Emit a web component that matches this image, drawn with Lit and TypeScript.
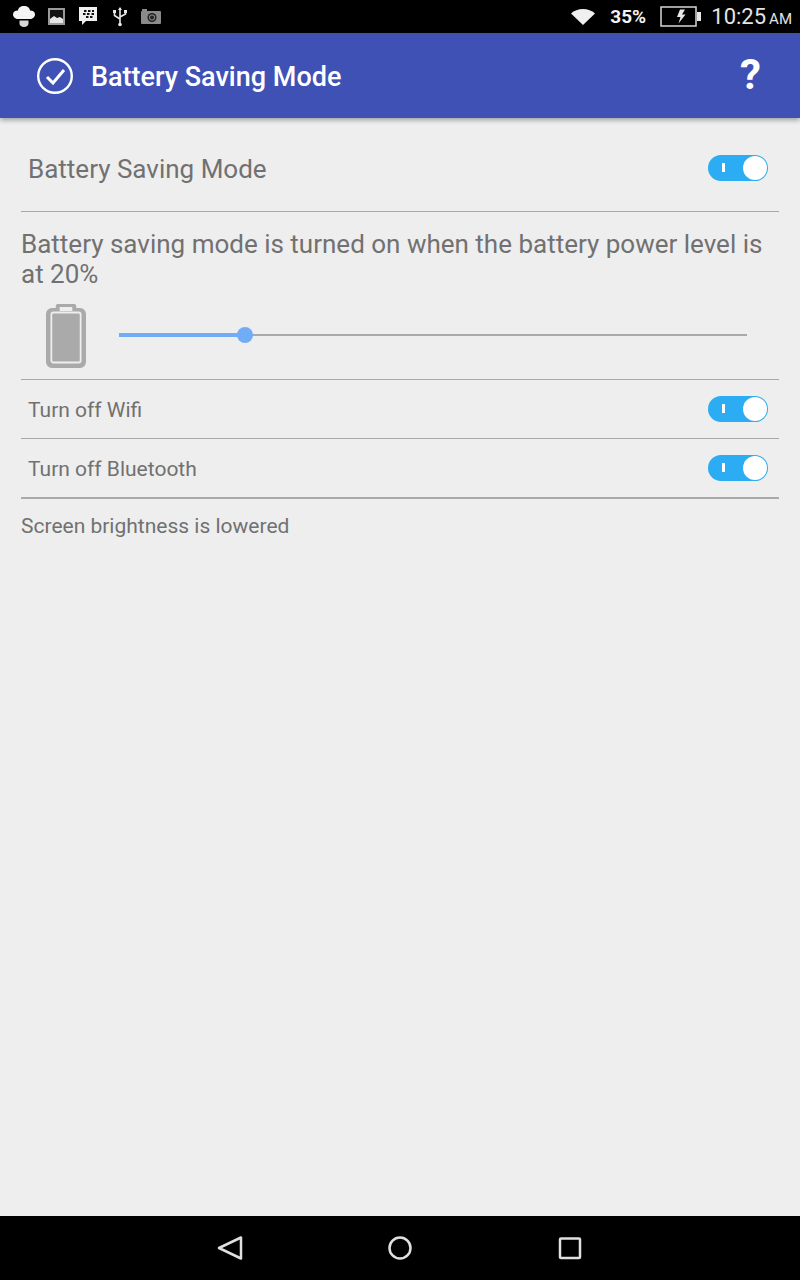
import { LitElement, html, css } from "lit";
import { customElement } from "lit/decorators.js";

@customElement("app-root")
export class AppRoot extends LitElement {
  static styles = css`
    :host { display: flex; flex-direction: column; width: 800px; height: 1280px; background: #eee; font-family: Roboto, "Liberation Sans", sans-serif; color: #717171; overflow: hidden; }
    .status { height: 33px; flex: none; background: #000; display: flex; align-items: center; color: #fff; }
    .status svg { display: block; flex: none; }
    .left { display: flex; align-items: center; padding-left: 12px; }
    .right { margin-left: auto; display: flex; align-items: center; }
    .pct { font-size: 19px; font-weight: 700; color: #f2f2f2; margin-left: 15px; width: 50px; }
    .time { font-size: 22px; color: #e4e4e4; margin-left: 10px; margin-right: 8px; white-space: nowrap; }
    .time small { font-size: 15px; margin-left: 3px; }
    .appbar { height: 85px; flex: none; background: #3f51b5; display: flex; align-items: center; box-shadow: 0 2px 5px rgba(0,0,0,.35); z-index: 1; padding-left: 36px; padding-right: 39px; }
    .title { color: #fff; font-size: 27px; font-weight: 500; margin-left: 17px; flex: 1; padding-top: 3px; }
    .help { color: #fff; font-size: 42px; font-weight: 700; line-height: 1; padding-bottom: 2px; }
    .main { flex: 1; padding: 0 21px; display: flex; flex-direction: column; }
    .row { display: flex; align-items: center; justify-content: space-between; padding: 0 11px 0 7px; border-bottom: 1px solid #a9a9a9; box-sizing: border-box; }
    .row span { padding-top: 2px; }
    .r1 { height: 94px; font-size: 26px; padding-top: 7px; }
    .r2 { height: 59px; font-size: 21px; }
    .r3 { height: 60px; font-size: 21px; border-bottom-width: 2px; }
    .switch { width: 60px; height: 26px; border-radius: 13px; background: #2cacf3; position: relative; flex: none; }
    .switch::before { content: ""; position: absolute; left: 14px; top: 8px; width: 3px; height: 9px; background: #fff; }
    .switch::after { content: ""; position: absolute; right: 1px; top: 1px; width: 24px; height: 24px; border-radius: 50%; background: #fff; }
    .desc { font-size: 26px; line-height: 30px; margin: 17px 0 0; height: 60px; }
    .level { display: flex; align-items: center; height: 91px; padding-top: 2px; border-bottom: 1px solid #a9a9a9; box-sizing: border-box; }
    .battery { margin-left: 25px; flex: none; }
    .track { margin-left: 33px; width: 628px; height: 2px; background: #a9a9a9; position: relative; }
    .fill { position: absolute; left: 0; top: -1px; height: 4px; width: 126px; background: #70adf6; }
    .thumb { position: absolute; left: 118px; top: -7px; width: 16px; height: 16px; border-radius: 50%; background: #70adf6; }
    .note { font-size: 21px; margin-top: 15px; }
    .nav { height: 64px; flex: none; background: #000; display: flex; align-items: center; justify-content: center; gap: 142px; }
    .nav svg { display: block; }
  `;

  render() {
    return html`
      <div class="status">
        <div class="left">
          <svg width="24" height="26" viewBox="0 0 24 26" fill="#f4f4f4"><path d="M12 2c3.500 0 5.800 2 6 4.500C21 6.500 23 8 23 10.500S20.500 15 18 15H6C3.500 15 1 13.200 1 10.500S3 6.500 6 6.500C6.200 4 8.500 2 12 2z"/><path d="M7.500 16.500h9v3c0 2-2 3.500-4.500 3.500s-4.500-1.500-4.500-3.500z" fill="#d8d8d8"/></svg>
          <svg style="margin-left:12px" width="17" height="17" viewBox="0 0 17 17"><rect x="1" y="1" width="15" height="15" fill="none" stroke="#9a9a9a" stroke-width="2"/><rect x="2" y="2" width="13" height="13" fill="#111"/><path d="M2 13V11L6 8l3 2 3-1 3 2v4H2z" fill="#e4e4e4"/></svg>
          <svg style="margin-left:14px" width="18" height="20" viewBox="0 0 18 20"><path d="M0 0h18v14H7l-4 4v-4H0z" fill="#f0f0f0"/><g fill="#111"><rect x="5" y="3" width="2.500" height="2"/><rect x="9" y="3" width="2.500" height="2"/><rect x="13" y="3" width="2" height="2"/><rect x="4" y="6" width="2.500" height="2"/><rect x="8" y="6" width="2.500" height="2"/><rect x="12.500" y="6" width="2.500" height="2"/><rect x="7" y="9" width="2.500" height="2"/><rect x="11" y="9" width="2.500" height="2"/></g></svg>
          <svg style="margin-left:16px" width="14" height="20" viewBox="0 0 14 20" fill="none" stroke="#e8e8e8" stroke-width="1.600"><path d="M7 1v16M1.500 5v3.500L7 12M12.500 5v2L7 10"/><circle cx="7" cy="17.500" r="1.800" fill="#e8e8e8" stroke="none"/><path d="M7 0l2 3H5z" fill="#e8e8e8" stroke="none"/><rect x="0" y="3" width="3" height="3" fill="#e8e8e8" stroke="none"/><rect x="11" y="3" width="3" height="3" fill="#e8e8e8" stroke="none"/></svg>
          <svg style="margin-left:14px" width="20" height="15" viewBox="0 0 20 15"><rect x="0" y="2" width="20" height="13" rx="1" fill="#8a8a8a"/><rect x="1" y="0" width="5" height="2" fill="#8a8a8a"/><circle cx="11" cy="8.500" r="4.500" fill="#222"/><circle cx="11" cy="8.500" r="3" fill="#8a8a8a"/><circle cx="11" cy="8.500" r="2" fill="#222"/></svg>
        </div>
        <div class="right">
          <svg width="24" height="16" viewBox="0 0 24 16"><path d="M0 4.500C3 1.500 7.500 0 12 0s9 1.500 12 4.500L12 16z" fill="#f0f0f0"/></svg>
          <span class="pct">35%</span>
          <svg width="41" height="21" viewBox="0 0 41 21"><rect x="1" y="1" width="35" height="19" fill="#000" stroke="#d8d8d8" stroke-width="1.500"/><rect x="37" y="6" width="4" height="9" fill="#e8e8e8"/><path d="M20 3.500h5l-3 5h3.500l-7 9 2-6.500H17z" fill="#e8e8e8"/></svg>
          <span class="time">10:25<small>AM</small></span>
        </div>
      </div>
      <div class="appbar">
        <svg width="38" height="38" viewBox="0 0 38 38" fill="none" stroke="#fff"><circle cx="19" cy="19" r="16.800" stroke-width="2.400"/><path d="M11 20l6 6 11-13" stroke-width="3"/></svg>
        <span class="title">Battery Saving Mode</span>
        <span class="help">?</span>
      </div>
      <div class="main">
        <div class="row r1"><span>Battery Saving Mode</span><div class="switch"></div></div>
        <div class="desc">Battery saving mode is turned on when the battery power level is at 20%</div>
        <div class="level">
          <svg class="battery" width="40" height="65" viewBox="0 0 41 65" preserveAspectRatio="none"><path d="M12 1h17a2 2 0 0 1 2 2v2h4a6 6 0 0 1 6 6v48a6 6 0 0 1-6 6H6a6 6 0 0 1-6-6V11a6 6 0 0 1 6-6h4V3a2 2 0 0 1 2-2z" fill="#a9aaa9"/><rect x="5.500" y="9.500" width="30" height="50" rx="2" fill="none" stroke="#eee" stroke-width="1.800"/><rect x="14" y="4" width="13" height="4" fill="#eee"/></svg>
          <div class="track"><div class="fill"></div><div class="thumb"></div></div>
        </div>
        <div class="row r2"><span>Turn off Wifi</span><div class="switch"></div></div>
        <div class="row r3"><span>Turn off Bluetooth</span><div class="switch"></div></div>
        <div class="note">Screen brightness is lowered</div>
      </div>
      <div class="nav">
        <svg width="28" height="28" viewBox="0 0 28 28" fill="none" stroke="#e0e0e0" stroke-width="2.500" stroke-linejoin="round"><path d="M25 3.500V24.500L3 14z"/></svg>
        <svg width="28" height="28" viewBox="0 0 28 28" fill="none" stroke="#e0e0e0" stroke-width="2.500"><circle cx="14" cy="14" r="10.500"/></svg>
        <svg width="28" height="28" viewBox="0 0 28 28" fill="none" stroke="#e0e0e0" stroke-width="2.500" stroke-linejoin="round"><rect x="4" y="4.500" width="20" height="19.500" rx="1"/></svg>
      </div>
    `;
  }
}
